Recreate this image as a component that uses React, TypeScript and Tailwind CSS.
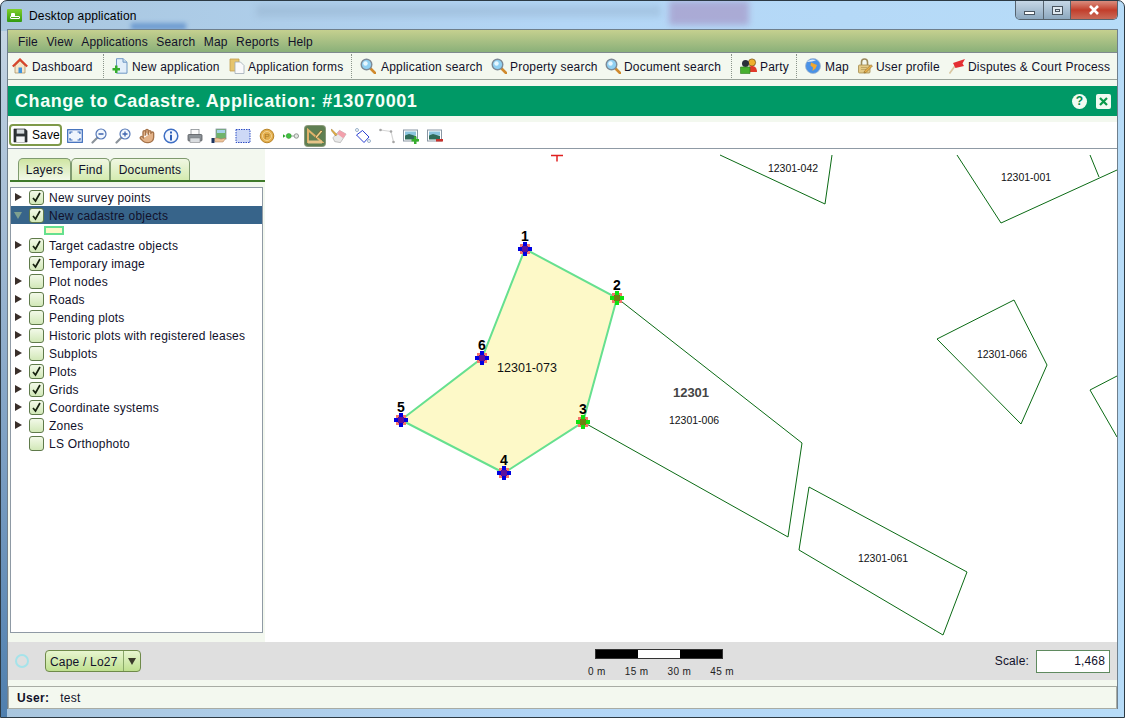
import { Hand } from 'lucide-react';
import type { ReactNode } from 'react';

const Sep = () => <div className="mr-[8px] h-[24px] w-0 border-l border-dotted border-[#8a948a]" />;

const Glass = () => (
  <svg viewBox="0 0 16 16" className="h-4 w-4">
    <line x1="10" y1="10" x2="15" y2="15" stroke="#d08a2e" strokeWidth="2.600" strokeLinecap="round" />
    <circle cx="6.500" cy="6.500" r="5.300" fill="#8fd0f2" stroke="#7d8a96" strokeWidth="1.400" />
    <circle cx="5.500" cy="5.500" r="2.200" fill="#e6f7ff" />
  </svg>
);

const HomeIcon = () => (
  <svg viewBox="0 0 16 16" className="h-4 w-4">
    <path d="M3 8v7h10V8L8 3z" fill="#f6e6c8" stroke="#a58a5a" strokeWidth=".7" />
    <rect x="6.500" y="9.500" width="3.500" height="5.500" fill="#3f94dc" />
    <path d="M.8 8.500 8 1.500l7.200 7" fill="none" stroke="#d8452c" strokeWidth="2.200" />
  </svg>
);

const NewDoc = () => (
  <svg viewBox="0 0 16 16" className="h-4 w-4">
    <path d="M4.500.7h6.500l4 3.500v11H4.500z" fill="#e3effa" stroke="#6f97c4" />
    <path d="M11 .7v3.500h4" fill="#c9dff0" stroke="#6f97c4" />
    <path d="M3 7.500h2.500V10H8v2.500H5.500V15H3v-2.500H.5V10H3z" fill="#35ad2c" />
  </svg>
);

const Forms = () => (
  <svg viewBox="0 0 16 16" className="h-4 w-4">
    <path d="M1 1h9v12H1z" fill="#e6c46c" stroke="#c0a050" strokeWidth=".8" />
    <path d="M6 4h5.500L15 7.500v8H6z" fill="#fafafa" stroke="#a0abb5" strokeWidth=".8" />
  </svg>
);

const PartyIcon = () => (
  <svg viewBox="0 0 17 16" className="h-4 w-[17px]">
    <circle cx="12" cy="4.500" r="3.600" fill="#eeb02e" stroke="#6b4a10" strokeWidth=".7" />
    <path d="M7 14c0-4 2-6 5-6s5 2 5 6z" fill="#e0392a" />
    <circle cx="5.500" cy="5.500" r="3.500" fill="#2a2f3a" />
    <path d="M.5 9h9.500v6.500H.5z" fill="#47b02f" stroke="#2c7a1b" strokeWidth=".6" />
  </svg>
);

const Globe = () => (
  <svg viewBox="0 0 16 16" className="h-4 w-4">
    <circle cx="8" cy="8" r="7.500" fill="#4a92e6" stroke="#a3b6cc" strokeWidth=".8" />
    <path d="M6 4.500 12 7l-1.500 3.500L7.500 13 8 9.500 5.500 7.500z" fill="#f2a72e" />
    <path d="M2 4c2-2.500 6-3.200 9-1.800L7 3.500z" fill="#dfeaf7" />
  </svg>
);

const Lock = () => (
  <svg viewBox="0 0 16 16" className="h-4 w-4">
    <path d="M4.500 7V4a3 3 0 0 1 6 0v3" fill="none" stroke="#9a8a5c" strokeWidth="1.600" />
    <rect x="1.500" y="7" width="11.500" height="8" rx="1" fill="#e3ca86" stroke="#a58c4c" strokeWidth=".8" />
    <path d="M4 9.500h6M4 11.500h5" stroke="#b39a58" strokeWidth=".7" />
    <path d="M15.500 8 9 14.500l-2 .5.500-2L14 6.700z" fill="#e8b04a" stroke="#7a5a22" strokeWidth=".5" />
  </svg>
);

const Flag = () => (
  <svg viewBox="0 0 16 16" className="h-4 w-4">
    <path d="M.5 15.500 7 6.500" stroke="#d9c7a2" strokeWidth="1.700" />
    <path d="M4 5 16 1l-2.500 4.500L15 8 6.500 10z" fill="#e42f33" />
  </svg>
);

const Floppy = () => (
  <svg viewBox="0 0 16 16" className="h-[15px] w-[15px]">
    <path d="M1 1h12l2 2v12H1z" fill="#2f3437" stroke="#1a1d20" strokeWidth=".6" />
    <rect x="4" y="1.500" width="8" height="4.500" fill="#d6dbde" />
    <rect x="3.500" y="9" width="9" height="6" fill="#f3f5f6" />
  </svg>
);

const FullExtent = () => (
  <svg viewBox="0 0 16 16" className="h-4 w-4">
    <rect x=".7" y="1.700" width="14.600" height="12.600" fill="#eef4fc" stroke="#3667b8" strokeWidth="1.200" />
    <path d="M3 6V4h2.500M13 6V4h-2.500M3 10v2h2.500M13 10v2h-2.500" fill="none" stroke="#3667b8" strokeWidth="1.200" />
  </svg>
);

const Zoom = ({ plus }: { plus?: boolean }) => (
  <svg viewBox="0 0 16 16" className="h-4 w-4">
    <line x1="6" y1="10" x2="1.500" y2="14.500" stroke="#8a929a" strokeWidth="2.200" strokeLinecap="round" />
    <circle cx="10" cy="6" r="5" fill="#f2f7fd" stroke="#5578b8" strokeWidth="1.200" />
    <path d={plus ? 'M7.500 6h5M10 3.500v5' : 'M7.500 6h5'} stroke="#3c62ad" strokeWidth="1.300" />
  </svg>
);

const Info = () => (
  <svg viewBox="0 0 16 16" className="h-4 w-4">
    <circle cx="8" cy="8" r="6.800" fill="#f4f8ff" stroke="#3f6fc4" strokeWidth="1.500" />
    <rect x="7" y="3.500" width="2" height="2" fill="#2f5fb8" />
    <rect x="7" y="6.800" width="2" height="5.700" fill="#2f5fb8" />
  </svg>
);

const Printer = () => (
  <svg viewBox="0 0 16 16" className="h-4 w-4">
    <rect x="4" y="1.500" width="8" height="6" fill="#fafafa" stroke="#8a8f94" strokeWidth=".8" />
    <rect x="1" y="6.500" width="14" height="6.500" rx="1" fill="#8b9196" stroke="#55595d" strokeWidth=".8" />
    <rect x="3" y="10" width="10" height="4.500" fill="#d9dcdf" stroke="#6f7377" strokeWidth=".5" />
  </svg>
);

const MapHand = () => (
  <svg viewBox="0 0 16 16" className="h-4 w-4">
    <rect x="5" y="1" width="10" height="10" fill="#6fb36a" stroke="#8a9aa8" strokeWidth=".8" />
    <path d="M6 2h8v3H6z" fill="#a4d0e8" />
    <path d="M3 10.500c3-1 5 0 7 .5l5-1-3 4H4z" fill="#edc39a" stroke="#a5774e" strokeWidth=".5" />
    <rect x=".5" y="10" width="3" height="5" fill="#1e3560" />
  </svg>
);

const SelectBox = () => (
  <svg viewBox="0 0 16 16" className="h-4 w-4">
    <rect x="1" y="1.500" width="14" height="13" fill="#cdd8f6" stroke="#2f4fc4" strokeWidth="1" strokeDasharray="1.500 1" />
  </svg>
);

const Coin = () => (
  <svg viewBox="0 0 16 16" className="h-4 w-4">
    <circle cx="8" cy="8" r="6.800" fill="#e3ae4e" stroke="#b88428" />
    <circle cx="8" cy="8" r="4.500" fill="none" stroke="#f3d592" />
    <text x="8" y="11" textAnchor="middle" fontSize="8" fontFamily="Liberation Sans" fill="#a97a22">P</text>
  </svg>
);

const Nodes = () => (
  <svg viewBox="0 0 18 16" className="h-4 w-[18px]">
    <path d="M4 8h10" stroke="#8a9a8a" />
    <path d="M0 6v4l3-2z" fill="#2aa52a" />
    <circle cx="6.500" cy="8" r="2.800" fill="#3fc23f" stroke="#2a8a2a" strokeWidth=".6" />
    <circle cx="15" cy="8" r="2.500" fill="#e3e6e3" stroke="#8a8f8a" />
  </svg>
);

const SetSquare = () => (
  <svg viewBox="0 0 18 18" className="h-[18px] w-[18px]">
    <path d="M2 3v12h14z" fill="none" stroke="#e0b26a" strokeWidth="2" />
    <path d="M2 15h14" stroke="#e6c48a" strokeWidth="3" />
    <path d="M9 10l6-7 1.500 1.500-6 7z" fill="#f0d28a" stroke="#5a3a14" strokeWidth=".5" />
  </svg>
);

const Eraser = () => (
  <svg viewBox="0 0 17 16" className="h-4 w-[17px]">
    <path d="M2 10l7-8 7 4-6 9-6-1z" fill="#e9e9e9" stroke="#9a9a9a" strokeWidth=".6" />
    <path d="M6.500 5.500 9 2l7 4-3 4.500z" fill="#f2a0ac" />
    <path d="M.5.500l6 6-1.500 1.500-5-6z" fill="#e8b040" stroke="#7a5a22" strokeWidth=".4" />
  </svg>
);

const Diamond = () => (
  <svg viewBox="0 0 16 16" className="h-4 w-4">
    <path d="M7.500 2.500 14 9l-5 5.500L1.500 7z" fill="#fff" stroke="#2a3fd0" />
    <circle cx="2" cy="2" r="1.500" fill="#fff" stroke="#9ab0c8" />
    <circle cx="14" cy="13" r="1.500" fill="#fff" stroke="#9ab0c8" />
  </svg>
);

const Polyline = () => (
  <svg viewBox="0 0 16 16" className="h-4 w-4">
    <path d="M1.500 2 12 3.500l2.500 10.500" fill="none" stroke="#d6d6d6" strokeWidth="1.200" />
    <circle cx="1.500" cy="2" r="1.300" fill="#a5a5a5" />
    <circle cx="12" cy="3.500" r="1.300" fill="#a5a5a5" />
    <circle cx="14.500" cy="14" r="1.300" fill="#a5a5a5" />
  </svg>
);

const Picture = ({ plus }: { plus?: boolean }) => (
  <svg viewBox="0 0 16 16" className="h-4 w-4">
    <rect x=".5" y="2" width="14" height="11" fill="#fff" stroke="#8996a3" />
    <rect x="2" y="3.500" width="11" height="4" fill="#8cc5df" />
    <path d="M2 7.500l4-1.500 7 2v3.500H2z" fill="#2f6b5a" />
    {plus ? (
      <path d="M11 8.500h2.500V11H16v2.500h-2.500V16H11v-2.500H8.500V11H11z" fill="#35ad2c" />
    ) : (
      <rect x="9" y="11" width="7" height="2.500" fill="#c8312b" />
    )}
  </svg>
);

type TopItem = { icon: ReactNode; label: string; gap: string; width: string };

const topItems: (TopItem | 'sep')[] = [
  { icon: <HomeIcon />, label: 'Dashboard', gap: 'gap-[4px]', width: 'w-[62px]' },
  'sep',
  { icon: <NewDoc />, label: 'New application', gap: 'gap-[4px]', width: 'w-[88px]' },
  { icon: <Forms />, label: 'Application forms', gap: 'gap-[3px]', width: 'w-[94px]' },
  'sep',
  { icon: <Glass />, label: 'Application search', gap: 'gap-[5px]', width: 'w-[101px]' },
  { icon: <Glass />, label: 'Property search', gap: 'gap-[3px]', width: 'w-[86px]' },
  { icon: <Glass />, label: 'Document search', gap: 'gap-[3px]', width: 'w-[98px]' },
  'sep',
  { icon: <PartyIcon />, label: 'Party', gap: 'gap-[3px]', width: 'w-[27px]' },
  'sep',
  { icon: <Globe />, label: 'Map', gap: 'gap-[4px]', width: 'w-[23px]' },
  { icon: <Lock />, label: 'User profile', gap: 'gap-[3px]', width: 'w-[64px]' },
  { icon: <Flag />, label: 'Disputes & Court Process', gap: 'gap-[3px]', width: 'w-[143px]' },
];

const mapTools = [
  <FullExtent />,
  <Zoom />,
  <Zoom plus />,
  <Hand className="h-4 w-4 fill-[#e3b288] text-[#a5734a]" />,
  <Info />,
  <Printer />,
  <MapHand />,
  <SelectBox />,
  <Coin />,
  <Nodes />,
];

const mapToolsAfter = [<Eraser />, <Diamond />, <Polyline />, <Picture plus />, <Picture />];

const layers: { name: string; on?: boolean; arrow?: boolean; selected?: boolean; legend?: boolean }[] = [
  { name: 'New survey points', on: true, arrow: true },
  { name: 'New cadastre objects', on: true, arrow: true, selected: true, legend: true },
  { name: 'Target cadastre objects', on: true, arrow: true },
  { name: 'Temporary image', on: true },
  { name: 'Plot nodes', arrow: true },
  { name: 'Roads', arrow: true },
  { name: 'Pending plots', arrow: true },
  { name: 'Historic plots with registered leases', arrow: true },
  { name: 'Subplots', arrow: true },
  { name: 'Plots', on: true, arrow: true },
  { name: 'Grids', on: true, arrow: true },
  { name: 'Coordinate systems', on: true, arrow: true },
  { name: 'Zones', arrow: true },
  { name: 'LS Orthophoto' },
];

const tabs = [
  { name: 'Layers', width: 'w-[53px]', cls: 'bg-gradient-to-b from-[#cfe5a2] to-[#f2f9e8]' },
  { name: 'Find', width: 'w-[39px]', cls: 'bg-gradient-to-b from-[#f0f7e2] to-[#d4ebb0]' },
  { name: 'Documents', width: 'w-[80px]', cls: 'bg-gradient-to-b from-[#f0f7e2] to-[#d4ebb0]' },
];

const parcels = [
  { points: '720,155 825,204 832,155', closed: false },
  { points: '957,155 1001,223 1117,170', closed: false },
  { points: '1090,155 1099,177', closed: false },
  { points: '1014,300 937,339 1021,424 1047,365', closed: true },
  { points: '1117,376 1090,390 1117,437', closed: false },
  { points: '617,298 802,443 788,537 583,422', closed: false },
  { points: '809,487 967,572 943,635 799,550', closed: true },
];

const parcelLabels = [
  ['12301-042', 793, 172],
  ['12301-001', 1026, 181],
  ['12301-066', 1002, 358],
  ['12301-006', 694, 424],
  ['12301-061', 883, 562],
] as const;

const vertices = [
  { n: '1', x: 525, y: 249, c: '#0000e0', m: '#5c0f9c' },
  { n: '2', x: 617, y: 298, c: '#10e010', m: '#6f8010' },
  { n: '3', x: 583, y: 422, c: '#10e010', m: '#6f8010' },
  { n: '4', x: 504, y: 473, c: '#0000e0', m: '#5c0f9c' },
  { n: '5', x: 401, y: 420, c: '#0000e0', m: '#5c0f9c' },
  { n: '6', x: 482, y: 358, c: '#0000e0', m: '#5c0f9c' },
];

function MapCanvas() {
  return (
    <svg viewBox="265 149 852 493" className="block h-[493px] w-[852px]" fontFamily="Liberation Sans, sans-serif">
      <path d="M551 155.500h12M557 155.500v6" stroke="#e02020" strokeWidth="1.500" fill="none" />
      {parcels.map((p) =>
        p.closed ? (
          <polygon key={p.points} points={p.points} fill="none" stroke="#0a6a14" strokeWidth="1" />
        ) : (
          <polyline key={p.points} points={p.points} fill="none" stroke="#0a6a14" strokeWidth="1" />
        ),
      )}
      {parcelLabels.map(([t, x, y]) => (
        <text key={t} x={x} y={y} textAnchor="middle" fontSize="10.500" fill="#111">
          {t}
        </text>
      ))}
      <text x="691" y="397" textAnchor="middle" fontSize="13" fontWeight="700" fill="#444">
        12301
      </text>
      <polygon
        points="525,249 617,298 583,422 504,473 401,420 482,358"
        fill="#fdf9c8"
        stroke="#66e08f"
        strokeWidth="2"
      />
      <text x="527" y="372" textAnchor="middle" fontSize="12.500" fill="#111">
        12301-073
      </text>
      {vertices.map((v) => (
        <g key={v.n}>
          <rect x={v.x - 5} y={v.y - 5} width="10" height="10" fill="#f4746a" />
          <rect x={v.x - 7} y={v.y - 2} width="14" height="4" fill={v.c} />
          <rect x={v.x - 2} y={v.y - 7} width="4" height="14" fill={v.c} />
          <rect x={v.x - 3} y={v.y - 3} width="6" height="6" fill={v.m} />
          <text x={v.x} y={v.y - 8} textAnchor="middle" fontSize="14" fontWeight="700" fill="#000">
            {v.n}
          </text>
        </g>
      ))}
    </svg>
  );
}

export default function App() {
  return (
    <div
      className="relative flex h-[718px] w-[1125px] flex-col overflow-hidden rounded-t-[7px] border border-[#2c3a44] bg-gradient-to-r from-[#a9c6de] via-[#b3d6f6] to-[#b7dcf8] px-[6px] text-[12px] text-[#11112a]"
      style={{ fontFamily: '"Liberation Sans", Arial, sans-serif' }}
    >
      {/* blurred desktop behind the glass */}
      <div className="absolute left-[255px] top-[4px] h-[12px] w-[405px] bg-[#8da8c4] opacity-35 blur-[3px]" />
      <div className="absolute left-[668px] top-0 h-[24px] w-[80px] bg-[#a698c8] opacity-70 blur-[3px]" />
      <div className="absolute left-[130px] top-[22px] h-[7px] w-[55px] bg-[#6f9cd0] blur-[2px]" />
      <div className="absolute bottom-0 left-0 top-[30px] w-[6px] bg-gradient-to-b from-[#c5d5e3] to-[#4f7fae]" />

      {/* title bar */}
      <div className="relative flex h-[28px] shrink-0 items-start">
        <div className="mt-[8px] flex h-[13px] w-[15px] flex-col items-center justify-center rounded-[1px] bg-gradient-to-b from-[#7fd02a] to-[#2f9a10]">
          <div className="h-[3px] w-[4px] -translate-x-[2px] rounded-t-[1px] bg-white" />
          <div className="h-[3px] w-[10px] rounded-[1px] border border-white" />
        </div>
        <span className="ml-[7px] mt-[6px] text-[12px] tracking-[0.15px] text-black">Desktop application</span>
        <div className="ml-auto flex h-[19px] w-[103px] overflow-hidden rounded-b-[5px] border border-t-0 border-[#56636e] text-white">
          <div className="flex w-[28px] items-end justify-center border-r border-[#56636e] bg-gradient-to-b from-[#c6d7e6] to-[#8da8bf] pb-[4px]">
            <div className="h-[4px] w-[11px] border border-[#4a5560] bg-white" />
          </div>
          <div className="flex w-[27px] items-center justify-center border-r border-[#56636e] bg-gradient-to-b from-[#c6d7e6] to-[#8da8bf]">
            <div className="flex h-[9px] w-[11px] items-center justify-center border border-[#4a5560] bg-[#dfe8f0]">
              <div className="h-[3px] w-[5px] border border-[#4a5560]" />
            </div>
          </div>
          <div className="flex flex-1 items-center justify-center bg-gradient-to-b from-[#d98c7e] via-[#c23d2b] to-[#c96a58]">
            <svg viewBox="0 0 12 10" className="h-[10px] w-[12px]">
              <path d="M2 1l8 8M10 1 2 9" stroke="#fff" strokeWidth="2.600" />
            </svg>
          </div>
        </div>
      </div>

      {/* app content */}
      <div className="relative flex flex-1 flex-col border-x border-t border-[#6f7f8c] bg-[#f3f8ef]">
        <nav className="flex h-[22px] shrink-0 items-center gap-[8.500px] bg-gradient-to-b from-[#c5d08f] to-[#8ab079] pl-[10px] pt-[2px] tracking-[0.15px]">
          {['File', 'View', 'Applications', 'Search', 'Map', 'Reports', 'Help'].map((m) => (
            <span key={m}>{m}</span>
          ))}
        </nav>
        <div className="flex h-[28px] shrink-0 items-center border-y border-b-[#9aa39a] border-t-[#7f8a8f] pl-[4px] tracking-[0.2px]">
          {topItems.map((item, i) =>
            item === 'sep' ? (
              <Sep key={i} />
            ) : (
              <div key={item.label} className={`mr-[9px] flex items-center whitespace-nowrap ${item.gap}`}>
                {item.icon}
                <span className={`pt-[2px] ${item.width}`}>{item.label}</span>
              </div>
            ),
          )}
        </div>
        <div className="mt-[6px] flex h-[30px] shrink-0 items-center justify-between bg-[#009966] pl-[7px] pr-[6px]">
          <h1 className="text-[18px] font-bold tracking-[0.57px] text-[#f4fff8]">
            Change to Cadastre. Application: #13070001
          </h1>
          <div className="flex items-center gap-[9px]">
            <div className="flex h-[15px] w-[15px] items-center justify-center rounded-full bg-[#f2fbf2] text-[12px] font-bold text-[#008a4a]">
              ?
            </div>
            <div className="flex h-[15px] w-[15px] items-center justify-center rounded-[2px] bg-[#f2fbf2]">
              <svg viewBox="0 0 9 9" className="h-[9px] w-[9px]">
                <path d="M1 1l7 7M8 1 1 8" stroke="#0a9a4a" strokeWidth="2.200" />
              </svg>
            </div>
          </div>
        </div>
        <div className="mt-[6px] flex h-[27px] shrink-0 items-center border-b border-[#8f9aa5] bg-white pl-[1px]">
          <button className="flex h-[22px] w-[53px] items-center gap-[4px] rounded-[4px] border-2 border-[#7f9a4a] bg-white pl-[2px] tracking-[0.1px] text-black">
            <Floppy />
            Save
          </button>
          <div className="ml-[5px] flex items-center gap-[8px] pt-[1px]">
            {mapTools.map((t, i) => (
              <div key={i} className="flex w-[16px] items-center justify-center">
                {t}
              </div>
            ))}
            <div className="mx-[-2px] flex h-[20px] w-[20px] items-center justify-center rounded-[3px] bg-[#5f7f52] shadow-[0_0_0_1px_#8a9a7a]">
              <SetSquare />
            </div>
            {mapToolsAfter.map((t, i) => (
              <div key={i} className="flex w-[16px] items-center justify-center">
                {t}
              </div>
            ))}
          </div>
        </div>

        <div className="flex h-[493px] shrink-0">
          {/* layers panel */}
          <aside className="flex w-[257px] shrink-0 flex-col pl-[2px] pt-[9px] tracking-[0.22px]">
            <div className="flex h-[24px] items-stretch border-b-2 border-[#3f7a2a] pl-[8px]">
              {tabs.map((t) => (
                <div
                  key={t.name}
                  className={`flex items-center justify-center rounded-t-[5px] border border-b-0 border-[#7f9a6f] ${t.width} ${t.cls}`}
                >
                  {t.name}
                </div>
              ))}
            </div>
            <div className="mt-[5px] h-[446px] w-[253px] border border-[#8f9aa5] bg-white">
              {layers.map((l) => (
                <div key={l.name}>
                  <div className={`flex h-[18px] items-center ${l.selected ? 'bg-[#37648a]' : ''}`}>
                    <span className="flex w-[14px] justify-center">
                      {l.arrow && (
                        <svg viewBox="0 0 8 8" className="h-[8px] w-[8px]">
                          <path
                            d={l.selected ? 'M0 1h8L4 8z' : 'M1 0l7 4-7 4z'}
                            fill={l.selected ? '#7fa08f' : '#3a2f2a'}
                          />
                        </svg>
                      )}
                    </span>
                    <span className="ml-[4px] flex h-[15px] w-[15px] items-center justify-center rounded-[3px] border border-[#5f7a4a] bg-gradient-to-b from-[#f2f9e8] to-[#d2e8b8]">
                      {l.on && (
                        <svg viewBox="0 0 11 11" className="h-[11px] w-[11px]">
                          <path d="M2 6l2.500 3L9 1" fill="none" stroke="#16210f" strokeWidth="1.700" />
                        </svg>
                      )}
                    </span>
                    <span className="ml-[5px] whitespace-nowrap pt-[1px]">{l.name}</span>
                  </div>
                  {l.legend && (
                    <div className="flex h-[12px] items-center pl-[33px]">
                      <div className="h-[9px] w-[20px] border-2 border-[#66e08f] bg-[#fdf9c8]" />
                    </div>
                  )}
                </div>
              ))}
            </div>
          </aside>
          <main className="overflow-hidden bg-white">
            <MapCanvas />
          </main>
        </div>

        {/* status row with projection and scale */}
        <div className="flex h-[38px] shrink-0 bg-[#dfdfdf]">
          <div className="ml-[7px] mt-[12px] h-[14px] w-[14px] rounded-full border-2 border-[#a5e3ea]" />
          <div className="ml-[16px] mt-[8px] flex h-[22px] w-[96px] overflow-hidden rounded-[4px] border border-[#6f8a4a] bg-gradient-to-b from-[#e8f5d0] to-[#bfe08f]">
            <span className="flex flex-1 items-center pl-[4px] pt-[1px] tracking-[0.2px]">Cape / Lo27</span>
            <span className="flex w-[17px] items-center justify-center border-l border-[#8aa86a]">
              <svg viewBox="0 0 8 7" className="h-[7px] w-[8px]">
                <path d="M0 0h8L4 7z" fill="#3a3a2a" />
              </svg>
            </span>
          </div>
          <div className="ml-[445px] mt-[7px] flex w-[148px] flex-col">
            <div className="ml-[9px] flex h-[10px] w-[128px] border border-[#333]">
              <div className="flex-1 bg-black" />
              <div className="flex-1 bg-white" />
              <div className="flex-1 bg-black" />
            </div>
            <div className="ml-[2px] mt-[5px] flex justify-between text-[10px] tracking-[0.35px] text-[#222]">
              <span>0 m</span>
              <span>15 m</span>
              <span>30 m</span>
              <span>45 m</span>
            </div>
          </div>
          <div className="ml-auto mr-[7px] mt-[7px] flex h-[23px] items-center gap-[7px] pt-[1px] tracking-[0.15px]">
            <span>Scale:</span>
            <div className="flex h-[23px] w-[74px] items-center justify-end border border-[#5f8a5f] bg-white pr-[4px]">1,468</div>
          </div>
        </div>

        <div className="mt-[6px] flex h-[23px] shrink-0 items-center border border-[#a8aca4] pl-[8px] pt-[1px] tracking-[0.3px]">
          <span className="font-bold">User:</span>
          <span className="ml-[11px]">test</span>
        </div>
      </div>
      <div className="h-[8px] shrink-0" />
    </div>
  );
}
